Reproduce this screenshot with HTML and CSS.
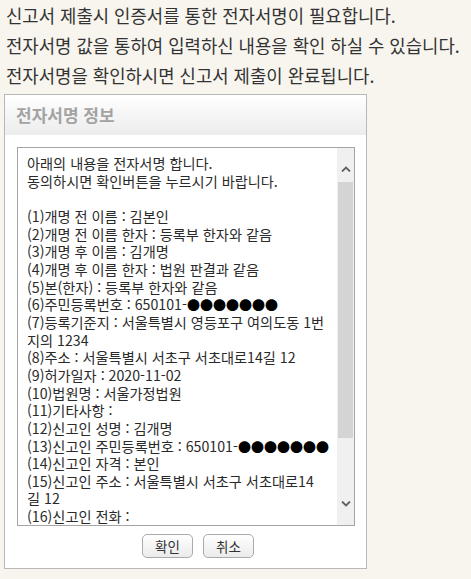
FILE: index.html
```html
<!DOCTYPE html>
<html lang="ko">
<head>
<meta charset="utf-8">
<title>전자서명</title>
<link rel="stylesheet" href="styles.css">
</head>
<body>
<div class="intro">
  <p>신고서 제출시 인증서를 통한 전자서명이 필요합니다.</p>
  <p>전자서명 값을 통하여 입력하신 내용을 확인 하실 수 있습니다.</p>
  <p>전자서명을 확인하시면 신고서 제출이 완료됩니다.</p>
</div>
<div class="dialog">
  <div class="dialog-header">전자서명 정보</div>
  <div class="dialog-body">
    <div class="textbox">
      <div class="textbox-text"><p>아래의 내용을 전자서명 합니다.</p><p>동의하시면 확인버튼을 누르시기 바랍니다.</p><p>&nbsp;</p><p>(1)개명 전 이름 : 김본인</p><p>(2)개명 전 이름 한자 : 등록부 한자와 같음</p><p>(3)개명 후 이름 : 김개명</p><p>(4)개명 후 이름 한자 : 법원 판결과 같음</p><p>(5)본(한자) : 등록부 한자와 같음</p><p>(6)주민등록번호 : 650101-<span class="dots">●●●●●●●</span></p><p>(7)등록기준지 : 서울특별시 영등포구 여의도동 1번</p><p>지의 1234</p><p>(8)주소 : 서울특별시 서초구 서초대로14길 12</p><p>(9)허가일자 : 2020-11-02</p><p>(10)법원명 : 서울가정법원</p><p>(11)기타사항 :</p><p>(12)신고인 성명 : 김개명</p><p>(13)신고인 주민등록번호 : 650101-<span class="dots">●●●●●●●</span></p><p>(14)신고인 자격 : 본인</p><p>(15)신고인 주소 : 서울특별시 서초구 서초대로14</p><p>길 12</p><p>(16)신고인 전화 :</p><p>(17)신고인 휴대전화 :</p></div>
      <div class="scrollbar">
        <div class="sb-btn sb-up"><svg width="10" height="6" viewBox="0 0 10 6"><polyline points="1,5.5 5,1.5 9,5.5" fill="none" stroke="#606060" stroke-width="1.8"/></svg></div>
        <div class="sb-thumb"></div>
        <div class="sb-track"></div>
        <div class="sb-btn sb-down"><svg width="10" height="6" viewBox="0 0 10 6"><polyline points="1,0.5 5,4.5 9,0.5" fill="none" stroke="#606060" stroke-width="1.8"/></svg></div>
      </div>
    </div>
    <div class="buttons">
      <button class="btn" type="button">확인</button>
      <button class="btn" type="button">취소</button>
    </div>
  </div>
</div>
</body>
</html>
```

FILE: styles.css
```css
* { box-sizing: border-box; }

body {
  margin: 0;
  background: #f8f5ef;
  font-family: "Noto Sans CJK KR", "Noto Sans", sans-serif;
  color: #333;
}

p { margin: 0; }

.intro {
  padding-left: 6px;
  font-size: 17.8px;
  line-height: 30px;
  color: #333;
}

.dialog {
  margin: 4px 0 0 4px;
  width: 363px;
  height: 475px;
  border: 1px solid #b8b8b8;
  background: #fff;
}

.dialog-header {
  height: 40px;
  padding-left: 11px;
  background: linear-gradient(#ffffff, #ececec);
  font-size: 17px;
  font-weight: bold;
  line-height: 40px;
  color: #a3a3a3;
}

.dialog-body {
  padding: 12px 11px 0 12px;
}

.textbox {
  display: flex;
  width: 338px;
  height: 379px;
  border: 1px solid #a5a5a5;
  background: #fff;
}

.textbox-text {
  flex: 1;
  padding: 7px 0 0 9px;
  font-size: 14.2px;
  line-height: 17.65px;
  white-space: pre;
  overflow: hidden;
  color: #2a2a2a;
}

.dots {
  font-size: 13px;
  line-height: 1;
  color: #000;
}

.scrollbar {
  width: 17px;
  display: flex;
  flex-direction: column;
  background: #f0f0f0;
}

.sb-btn {
  height: 34px;
  display: flex;
  justify-content: center;
  align-items: flex-start;
}

.sb-up { padding-top: 18px; }
.sb-down { padding-top: 10px; }

.sb-thumb {
  height: 256px;
  margin: 0 1px;
  background: #d4d4d4;
}

.sb-track { flex: 1; }

.buttons {
  display: flex;
  justify-content: center;
  gap: 10px;
  padding: 8px 0 0 24px;
}

.btn {
  width: 51px;
  height: 24px;
  border: 1px solid #aaaaaa;
  border-radius: 5px;
  background: linear-gradient(#ffffff, #ebebeb);
  font-family: "Noto Sans CJK KR", sans-serif;
  font-size: 13.5px;
  line-height: 20px;
  color: #333;
  padding: 0;
}
```
